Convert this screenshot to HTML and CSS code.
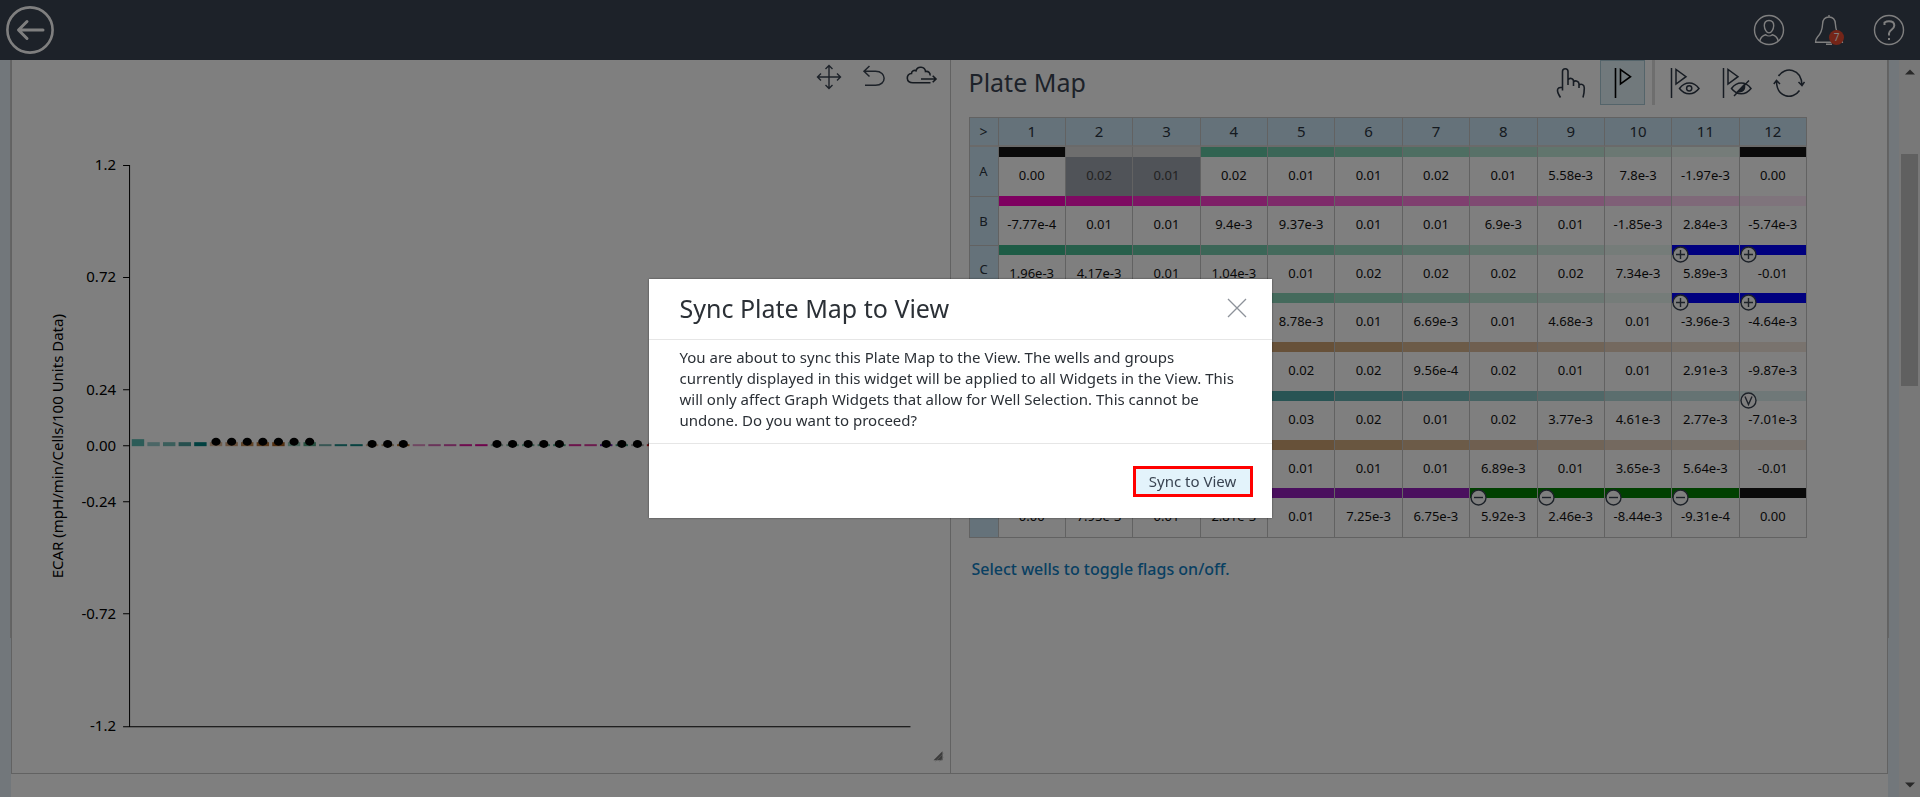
FILE: index.html
```html
<!DOCTYPE html>
<html lang="en">
<head>
<meta charset="utf-8">
<title>Plate Map</title>
<link rel="stylesheet" href="styles.css">
</head>
<body>
<header class="topbar">
  <button class="icon-btn" aria-label="Back">
    <svg width="48" height="48" viewBox="0 0 48 48" fill="none" stroke="#fff"><circle cx="24" cy="24" r="22.6" stroke-width="2.6"/><path d="M37 24H13M21 15.500L12.500 24L21 32.500" stroke-width="3" stroke-linecap="round" stroke-linejoin="round"/></svg>
  </button>
  <nav class="topbar-actions">
    <button class="icon-btn" aria-label="Account">
      <svg width="32" height="32" viewBox="0 0 32 32" fill="none" stroke="#fff" stroke-width="1.400"><circle cx="16" cy="16" r="14.500"/><path d="M16 6.500C12.600 6.500 11.200 8.800 11.300 11.800C11.500 15.400 13.500 18.900 16 18.900S20.500 15.400 20.700 11.800C20.800 8.800 19.400 6.500 16 6.500ZM6.800 27C7.600 22.800 9.200 21.600 12.700 20.700C14.500 22.300 17.500 22.300 19.300 20.700C22.800 21.600 24.400 22.800 25.200 27"/></svg>
    </button>
    <button class="icon-btn bell" aria-label="Notifications">
      <svg width="32" height="32" viewBox="0 0 32 32" fill="none" stroke="#fff" stroke-width="1.400"><path d="M16 1V3M16 3C11.500 3 9.800 6 9.600 10C9.300 16 8 19.500 4.500 23C3 24.600 2.600 26 2.600 28.200H29.400C29.400 26 29 24.600 27.500 23C24 19.500 22.700 16 22.400 10C22.200 6 20.500 3 16 3ZM13 30.300H19"/></svg>
      <span class="count">7</span>
    </button>
    <button class="icon-btn" aria-label="Help">
      <svg width="32" height="32" viewBox="0 0 32 32" fill="none" stroke="#fff" stroke-width="1.400"><circle cx="16" cy="16" r="14.500"/><path d="M11.500 11V8.500Q13.500 7.300 16 7.300C19.600 7.300 21.300 9 21.300 11.600C21.300 15.800 16 15.600 16 19.500V21.500M16 24V26" stroke-width="2"/></svg>
    </button>
  </nav>
</header>

<div class="workspace">
  <div class="gutter gutter-left"><div class="edge"></div></div>
  <main class="sheet">
    <div class="widgets">
      <section class="widget" aria-label="ECAR graph">
        <div class="graph-tools">
          <button class="icon-btn" aria-label="Move"><svg width="26" height="26" viewBox="0 0 26 26" fill="none" stroke="#3a4452" stroke-width="1.400"><path d="M13 1.500V24.500M1.500 13H24.500M9.500 5L13 1.500L16.500 5M9.500 21L13 24.500L16.500 21M5 9.500L1.500 13L5 16.500M21 9.500L24.500 13L21 16.500"/></svg></button>
          <button class="icon-btn" aria-label="Undo"><svg width="24" height="26" viewBox="0 0 24 26" fill="none" stroke="#3a4452" stroke-width="1.500"><path d="M7.500 2L2 7.300L7.500 12.500M2 7.300H13.500C25 7.300 25 21.300 13.500 21.300H3"/></svg></button>
          <button class="icon-btn" aria-label="Export"><svg width="32" height="26" viewBox="0 0 32 26" fill="none" stroke="#2b3440" stroke-width="1.600"><path d="M24.500 18.800H7C-.5 18.800 -.2 9.800 5.500 9.500C5.500 6.500 8.500 5.800 10 6.800C11.500 1.500 19 2.500 19.500 7.500C22.500 7 24.500 9 24 11.500M15 15H30M26.700 11.800L30 15L26.700 18.200"/></svg></button>
        </div>
        <svg class="chart" id="chart" viewBox="12 100 937 673" role="img" aria-label="ECAR bar graph">
          <g class="axis">
            <path d="M123 165.500H129.500V726.500H910M123 277.500H129M123 389.500H129M123 445.500H129M123 501.500H129M123 613.500H129M123 726.500H129"/>
          </g>
          <g class="tick-labels">
            <text x="116" y="170">1.2</text><text x="116" y="282">0.72</text><text x="116" y="395">0.24</text><text x="116" y="451">0.00</text><text x="116" y="507">-0.24</text><text x="116" y="619">-0.72</text><text x="116" y="731">-1.2</text>
          </g>
          <text class="axis-title" transform="translate(63 446) rotate(-90)">ECAR (mpH/min/Cells/100 Units Data)</text>
          <g id="bars"></g>
          <path d="M942 751V760H933Z" fill="#777"/><path d="M935 761L943 753M939 761L943 757" stroke="#bbb" stroke-width="0.700"/>
        </svg>
      </section>
      <section class="widget plate" aria-labelledby="plate-title">
        <div class="plate-head">
          <h2 id="plate-title">Plate Map</h2>
          <div class="plate-tools">
            <button class="tool" aria-label="Select wells"><svg width="30" height="32" viewBox="0 0 30 32" fill="none" stroke="#2f3947" stroke-width="1.600" stroke-linejoin="round"><path d="M4.500 30.500C2.500 27.500 1.300 25.500 1.500 23C1.700 21 3.500 20.300 6.500 20.300M6.500 23.500V4.500C6.500.8 12 .8 12 4.500V18M12 12.800C13.500 10.300 17.500 11.300 17.500 14V19M17.500 15C19.500 12.900 23 14.200 23 17V21M23 18C25.500 16.200 28.300 17.800 28.300 21C28.300 24.500 28 27 27 30.500"/></svg></button>
            <button class="tool active" aria-label="Flag mode"><svg width="30" height="32" viewBox="0 0 30 32" fill="none" stroke="#000" stroke-width="1.600"><path d="M7.500 1V31M12.500 2.500V17L22.500 9.700Z"/></svg></button>
            <span class="divider"></span>
            <button class="tool" aria-label="Show flags"><svg width="30" height="32" viewBox="0 0 30 32" fill="none" stroke="#2f3947" stroke-width="1.500"><path d="M1.500 1V31M6 2.500V17L16 9.700ZM9.500 21.500C15 14.300 23.500 14.300 29 21.500C23.500 28.500 15 28.500 9.500 21.500Z"/><circle cx="19.200" cy="21.300" r="2.600"/></svg></button>
            <button class="tool" aria-label="Hide flags"><svg width="30" height="32" viewBox="0 0 30 32" fill="none" stroke="#2f3947" stroke-width="1.500"><path d="M1.500 1V31M6 2.500V17L16 9.700ZM9.500 21.500C15 14.300 23.500 14.300 29 21.500C23.500 28.500 15 28.500 9.500 21.500ZM12 29L27 13.500"/><path d="M15.800 24.500L22.300 17.800C23.500 22.500 20.500 25.500 15.800 24.500Z" fill="#2f3947"/></svg></button>
            <button class="tool" aria-label="Refresh"><svg width="32" height="32" viewBox="0 0 32 32" fill="none" stroke="#2f3947" stroke-width="1.500"><path d="M5.500 9C11.500-.5 28.500.5 29 18.500M26.500 23.500C20 33 3.500 31.500 3.500 13.500M25.500 15L29 18.500L31.500 15M.8 17L3.500 13.500L7 17"/></svg></button>
          </div>
        </div>
        <table class="wells">
          <colgroup><col class="row-col"><col span="12"></colgroup>
          <thead><tr id="columns"><th scope="col">&gt;</th></tr></thead>
          <tbody id="rows"></tbody>
        </table>
        <p class="hint">Select wells to toggle flags on/off.</p>
      </section>
    </div>
  </main>
  <div class="gutter"><div class="edge"></div></div>
  <div class="scroll" aria-hidden="true">
    <svg width="10" height="6" viewBox="0 0 10 6"><path d="M0 5.500L5 .5L10 5.500Z" fill="#505050"/></svg>
    <div class="track"><div class="thumb"></div></div>
    <svg width="10" height="6" viewBox="0 0 10 6"><path d="M0 .5L5 5.500L10 .5Z" fill="#505050"/></svg>
  </div>
</div>

<div class="backdrop">
  <div class="dialog" role="dialog" aria-modal="true" aria-labelledby="dialog-title">
    <div class="dialog-head">
      <h1 id="dialog-title">Sync Plate Map to View</h1>
      <button class="icon-btn" aria-label="Close"><svg width="20" height="20" viewBox="0 0 20 20" fill="none" stroke="#8d929a" stroke-width="1.300"><path d="M1 1L19 19M19 1L1 19"/></svg></button>
    </div>
    <p class="dialog-body">You are about to sync this Plate Map to the View. The wells and groups currently displayed in this widget will be applied to all Widgets in the View. This will only affect Graph Widgets that allow for Well Selection. This cannot be undone. Do you want to proceed?</p>
    <div class="dialog-foot"><button class="sync">Sync to View</button></div>
  </div>
</div>
<script src="script.js"></script>
</body>
</html>
```

FILE: styles.css
```css
* { box-sizing: border-box; }
html, body { height: 100%; }
body { margin: 0; display: flex; flex-direction: column; overflow: hidden; background: #fff; color: #111; font-family: "Noto Sans", "Open Sans", sans-serif; font-size: 15px; }
button { font: inherit; color: inherit; background: none; border: 0; padding: 0; }
svg { display: block; }

.topbar { flex: none; height: 60px; padding: 0 15px 0 6px; display: flex; align-items: center; justify-content: space-between; background: #3a4452; }
.topbar-actions { display: flex; gap: 28px; }
.bell { position: relative; }
.count { position: absolute; left: 16px; top: 16px; width: 15px; height: 15px; border-radius: 50%; background: #e84a30; color: #fff; font-size: 10px; line-height: 15px; text-align: center; }

.workspace { flex: 1; display: flex; min-height: 0; }
.gutter { flex: none; width: 11px; background: #e4eef6; }
.edge { height: 578px; border-left: 1px solid #c8c8c8; }
.gutter-left .edge { border-left: 0; border-right: 1px solid #c8c8c8; }
.sheet { flex: 1; min-width: 0; overflow: hidden; }
.widgets { display: grid; grid-template-columns: minmax(0, 1fr) minmax(0, 1fr); border: 1px solid #c4c4c4; border-top: 0; }
.widget { min-width: 0; }
.graph-tools { height: 40px; padding: 4px 12px 0 0; display: flex; align-items: flex-start; justify-content: flex-end; gap: 20px; }
.chart { width: 100%; height: auto; }
.axis { fill: none; stroke: #000; stroke-width: 1; }
.tick-labels { text-anchor: end; font-size: 15px; }
.axis-title { text-anchor: middle; font-size: 15px; }

.plate { border-left: 1px solid #c4c4c4; padding: 0 80px 0 18px; }
.plate-head { height: 57px; display: flex; justify-content: space-between; }
.plate-head h2 { margin: 0; font-size: 25px; line-height: 45px; font-weight: 400; color: #3a4452; }
.plate-tools { display: flex; align-items: flex-start; gap: 7px; margin-right: -4px; }
.tool { width: 45px; height: 45px; display: grid; place-items: center; }
.tool.active { background: #e2f2f8; border: 1px solid #a8c8d4; }
.divider { width: 3px; height: 45px; background: #dcdcdc; }

.wells { width: 100%; height: 421px; table-layout: fixed; border-collapse: separate; border-spacing: 0; border: 1px solid #c4c4c4; border-right: 0; }
.row-col { width: 29px; }
.wells th, .wells td { padding: 0; border-right: 1px solid #c4c4c4; text-align: center; }
.wells th { background: #cae4f4; color: #2b3440; font-weight: 400; }
.wells thead th { height: 29px; font-size: 15px; line-height: 27px; border-bottom: 2px solid #d4d4d4; }
.wells thead th:first-child { font-size: 14px; }
.wells tbody th { font-size: 13px; border-top: 1px solid #c4c4c4; }
.wells tbody tr:first-child th { border-top: 0; }
.wells td { position: relative; vertical-align: top; font-size: 13px; }
.bar { height: 10px; }
.value { line-height: 37px; white-space: nowrap; }
.off { background: #a0a6b0; color: #444; }
.flag { position: absolute; left: 0; top: 1px; }
.hint { margin: 18px 3px; font-size: 16px; line-height: 26px; font-weight: 500; color: #1080c4; }

.scroll { flex: none; width: 21px; padding: 9px 0; display: flex; flex-direction: column; align-items: center; background: #f1f1f1; }
.track { flex: 1; padding-top: 79px; }
.thumb { width: 17px; height: 232px; background: #c1c1c1; }

.backdrop { position: fixed; inset: 0; display: grid; place-items: center; background: rgba(0, 0, 0, 0.5); }
.dialog { width: 623px; background: #fff; color: #2b3036; box-shadow: 0 0 2px rgba(0, 0, 0, 0.5); }
.dialog-head { height: 61px; padding: 0 25px 2px 31px; display: flex; align-items: center; justify-content: space-between; border-bottom: 1px solid #e6e6e6; }
.dialog-head h1 { margin: 0; font-size: 25px; line-height: 34px; font-weight: 400; }
.dialog-body { margin: 0; padding: 7px 31px 12px; font-size: 15px; line-height: 21px; border-bottom: 1px solid #e6e6e6; }
.dialog-foot { padding: 22px 19px 21px; display: flex; justify-content: flex-end; }
.sync { width: 120px; height: 31px; border: 3px solid #f00; background: #e3f3fb; color: #3a4452; font-size: 15px; line-height: 25px; }
```

FILE: script.js
```javascript
const values = {
  A: ["0.00", "0.02", "0.01", "0.02", "0.01", "0.01", "0.02", "0.01", "5.58e-3", "7.8e-3", "-1.97e-3", "0.00"],
  B: ["-7.77e-4", "0.01", "0.01", "9.4e-3", "9.37e-3", "0.01", "0.01", "6.9e-3", "0.01", "-1.85e-3", "2.84e-3", "-5.74e-3"],
  C: ["1.96e-3", "4.17e-3", "0.01", "1.04e-3", "0.01", "0.02", "0.02", "0.02", "0.02", "7.34e-3", "5.89e-3", "-0.01"],
  D: ["", "", "", "", "8.78e-3", "0.01", "6.69e-3", "0.01", "4.68e-3", "0.01", "-3.96e-3", "-4.64e-3"],
  E: ["", "", "", "", "0.02", "0.02", "9.56e-4", "0.02", "0.01", "0.01", "2.91e-3", "-9.87e-3"],
  F: ["", "", "", "", "0.03", "0.02", "0.01", "0.02", "3.77e-3", "4.61e-3", "2.77e-3", "-7.01e-3"],
  G: ["", "", "", "", "0.01", "0.01", "0.01", "6.89e-3", "0.01", "3.65e-3", "5.64e-3", "-0.01"],
  H: ["0.00", "7.95e-3", "0.01", "2.81e-3", "0.01", "7.25e-3", "6.75e-3", "5.92e-3", "2.46e-3", "-8.44e-3", "-9.31e-4", "0.00"]
};

// Each ramp: start colour, end colour, number of steps.
const ramps = {
  green: [[60, 184, 140], [234, 248, 242], 9],
  pink: [[252, 0, 192], [255, 232, 248], 11],
  brown: [[186, 124, 54], [242, 230, 220], 11],
  teal: [[0, 128, 128], [222, 240, 240], 11]
};
function shade(name, step) {
  const [from, to, steps] = ramps[name];
  return "rgb(" + from.map((v, k) => Math.round(v + (to[k] - v) * step / steps)).join(",") + ")";
}
function barColor(row, i) {
  if (row === "A") return i === 0 || i === 11 ? "#141414" : i < 3 ? "#dcdcdc" : shade("green", i - 1);
  if (row === "B") return shade("pink", i);
  if (row === "C" || row === "D") return i > 9 ? "#0000ff" : shade("green", i);
  if (row === "E" || row === "G") return shade("brown", i);
  if (row === "F") return shade("teal", i);
  return i === 11 ? "#141414" : i > 6 ? "#008000" : "#941ebc";
}
const glyphs = { plus: "M8.500 4V13M4 8.500H13", minus: "M4 8.500H13", v: "M5 4.500L8.500 12.500L12 4.500" };
const flags = { C10: "plus", C11: "plus", D10: "plus", D11: "plus", F11: "v", H7: "minus", H8: "minus", H9: "minus", H10: "minus" };

document.getElementById("columns").insertAdjacentHTML("beforeend",
  Array.from({ length: 12 }, (_, i) => `<th scope="col">${i + 1}</th>`).join(""));
document.getElementById("rows").innerHTML = Object.entries(values).map(([row, cells]) =>
  `<tr><th scope="row" aria-label="${row}">${row < "D" ? row : ""}</th>` + cells.map((value, i) => {
    const flag = flags[row + i];
    const mark = flag ? `<svg class="flag" width="17" height="17" viewBox="0 0 17 17" fill="none" stroke="#3a4452" stroke-width="1.400"><circle cx="8.500" cy="8.500" r="7.500" fill="#fff"/><path d="${glyphs[flag]}"/></svg>` : "";
    const off = row === "A" && (i === 1 || i === 2) ? ' class="off"' : "";
    return `<td${off}><div class="bar" style="background:${barColor(row, i)}"></div><div class="value">${value}</div>${mark}</td>`;
  }).join("") + "</tr>").join("");

// Bars: [colour, height, has data point]
const bars = [
  ["#58b8b0", 7], ["#96cccc", 4], ["#74bcb6", 4], ["#4c9e9c", 4], ["#008080", 4],
  ["#dcb898", 4, 1], ["#d0a078", 4, 1], ["#c08850", 4, 1], ["#b47438", 4, 1], ["#a86020", 4, 1],
  ["#90c8b4", 4, 1], ["#50a484", 4, 1], ["#70aca8", 2], ["#208c88", 2], ["#108480", 2],
  ["#d8b898", 2, 1], ["#b8a080", 2, 1], ["#b46c20", 2, 1],
  ["#e090c4", 2], ["#d468b4", 2], ["#d450ac", 2], ["#dc189c", 2], ["#dc0898", 2],
  ["#a0b8b0", 2, 1], ["#80b8a0", 2, 1], ["#70b098", 2, 1], ["#60a890", 2, 1], ["#48a080", 2, 1],
  ["#d82898", 2], ["#d8389c", 2], ["#6820a0", 2, 1], ["#48a080", 2, 1], ["#a0a0a0", 2, 1], ["#d02020", 2, 1]
];
document.getElementById("bars").innerHTML = bars.map(([color, height, dot], i) => {
  const x = 131.7 + 15.6 * i;
  const point = dot ? `<ellipse cx="${x + 6.2}" cy="${height > 2 ? 441.6 : 443.8}" rx="4.600" ry="3.900"/>` : "";
  return `<rect x="${x}" y="${446 - height}" width="12.400" height="${height}" fill="${color}"/>${point}`;
}).join("");
```
